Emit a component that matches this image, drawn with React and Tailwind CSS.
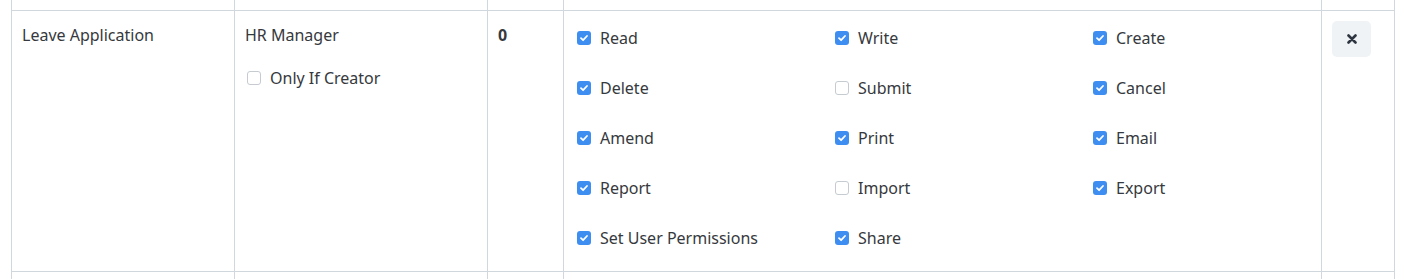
import React from "react";

function Check({ checked }) {
  if (checked) {
    return (
      <span className="inline-flex w-[14px] h-[14px] shrink-0 items-center justify-center rounded-[3px] bg-[#3d8ef0]">
        <svg width="10" height="10" viewBox="0 0 10 10" fill="none">
          <path d="M2 5.2 L4.1 7.2 L8 3" stroke="white" strokeWidth="1.8" strokeLinecap="round" strokeLinejoin="round" />
        </svg>
      </span>
    );
  }
  return <span className="inline-block w-[14px] h-[14px] shrink-0 rounded-[3px] border border-[#c5cbd1] bg-white" />;
}

const perms = [
  ["Read", true],
  ["Write", true],
  ["Create", true],
  ["Delete", true],
  ["Submit", false],
  ["Cancel", true],
  ["Amend", true],
  ["Print", true],
  ["Email", true],
  ["Report", true],
  ["Import", false],
  ["Export", true],
  ["Set User Permissions", true],
  ["Share", true],
];

function Strip({ className }) {
  return (
    <div className={"flex " + className}>
      <div className="w-[224px] border-l border-r border-[#d1d8dd]" />
      <div className="w-[253px] border-r border-[#d1d8dd]" />
      <div className="w-[76px] border-r border-[#d1d8dd]" />
      <div className="w-[758px] border-r border-[#d1d8dd]" />
      <div className="w-[73px] border-r border-[#d1d8dd]" />
    </div>
  );
}

export default function App() {
  return (
    <div className="w-[1402px] h-[279px] overflow-hidden bg-white font-['Noto_Sans',sans-serif] text-[16px] leading-[24px] text-[#36393d]">
      <div className="ml-[11px] w-[1384px]">
        <Strip className="h-[11px] border-b border-[#d1d8dd]" />
        <div className="flex h-[261px] border-b border-[#d1d8dd]">
          <div className="w-[224px] border-l border-r border-[#d1d8dd] px-[10px] pt-[12px]">
            Leave Application
          </div>
          <div className="w-[253px] border-r border-[#d1d8dd] px-[10px] pt-[12px]">
            <div>HR Manager</div>
            <label className="mt-[19px] flex items-center gap-[9px] pl-[2px]">
              <Check checked={false} />
              <span>Only If Creator</span>
            </label>
          </div>
          <div className="w-[76px] border-r border-[#d1d8dd] px-[10px] pt-[12px] font-bold">0</div>
          <div className="w-[758px] border-r border-[#d1d8dd] pl-[13px] pt-[15px]">
            <div className="grid grid-cols-[258px_258px_258px] gap-y-[26px]">
              {perms.map(([label, c]) => (
                <label key={label} className="flex items-center gap-[9px]">
                  <Check checked={c} />
                  <span>{label}</span>
                </label>
              ))}
            </div>
          </div>
          <div className="w-[73px] border-r border-[#d1d8dd] px-[10px] pt-[10px]">
            <button className="flex w-[39px] h-[36px] items-center justify-center rounded-[5px] bg-[#f0f3f6]">
              <svg width="10" height="10" viewBox="0 0 10 10">
                <path d="M1.5 1.5 L8.5 8.5 M8.5 1.5 L1.5 8.5" stroke="#2d3640" strokeWidth="2.6" strokeLinecap="round" />
              </svg>
            </button>
          </div>
        </div>
        <Strip className="h-[20px]" />
      </div>
    </div>
  );
}
